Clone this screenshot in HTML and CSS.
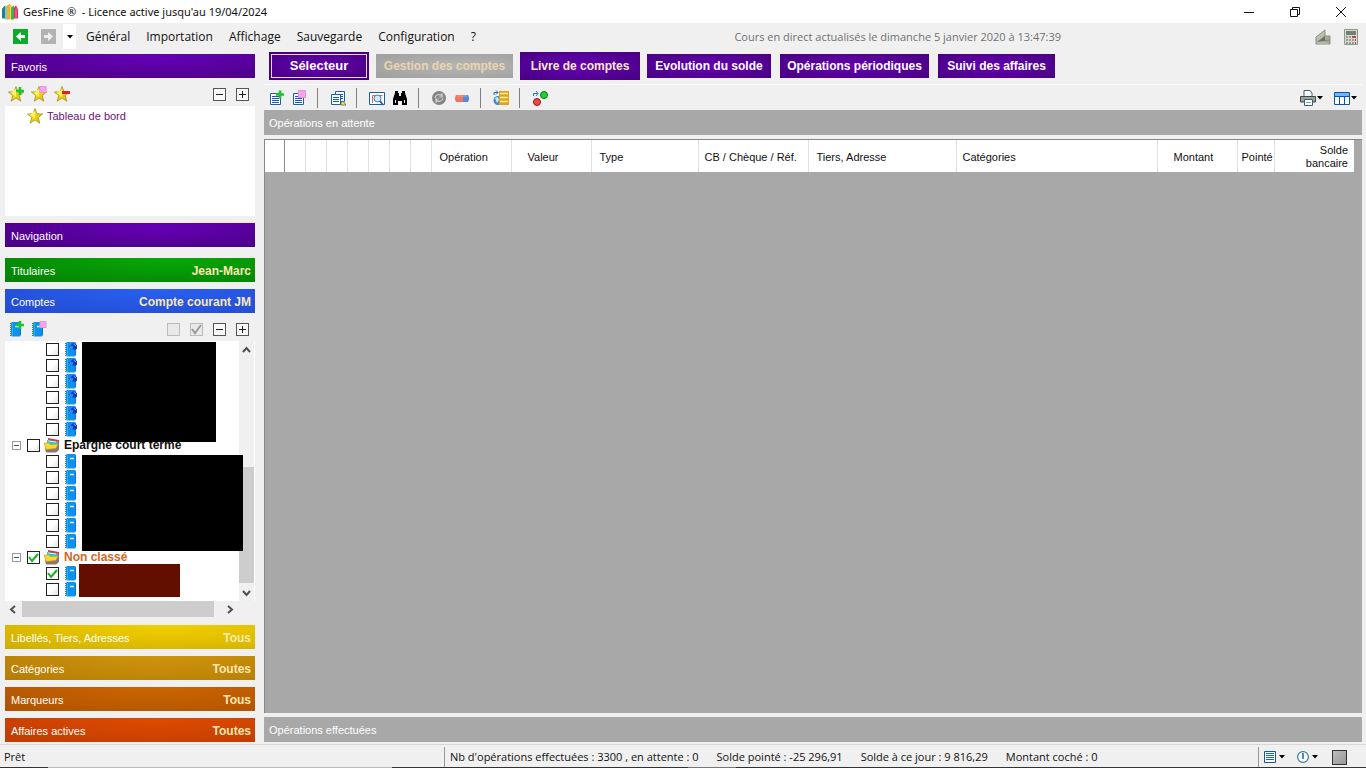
FILE: index.html
```html
<!DOCTYPE html>
<html lang="fr">
<head>
<meta charset="utf-8">
<title>GesFine</title>
<link rel="stylesheet" href="styles.css">
</head>
<body>
<svg class="sprite" aria-hidden="true">
  <defs>
    <linearGradient id="gold" x1="0" y1="0" x2="1" y2="1"><stop offset="0" stop-color="#fff23a"/><stop offset="1" stop-color="#dfb400"/></linearGradient>
    <linearGradient id="stone" x1="0" y1="0" x2="1" y2="1"><stop offset="0" stop-color="#d9ddcc"/><stop offset="1" stop-color="#8d907e"/></linearGradient>
  </defs>
  <symbol id="star" viewBox="0 0 16 16"><path d="M8 .5l2 5.300 5.700.2-4.500 3.500 1.600 5.700L8 12l-4.800 3.200 1.600-5.700L.4 6l5.600-.2z" fill="url(#gold)" stroke="#9a8614" stroke-width=".7"/><path d="M8 3v8L3 7z" fill="#fff45c"/></symbol>
  <symbol id="plus" viewBox="0 0 8 8"><path d="M2.700 0h2.600v2.700H8v2.600H5.300V8H2.700V5.300H0V2.700h2.700z" fill="#18c52a"/></symbol>
  <symbol id="pink" viewBox="0 0 8 8"><path d="M.5.500h7v7h-7z" fill="#f9a3ee" stroke="#e58fdd"/></symbol>
  <symbol id="page" viewBox="0 0 16 16"><path d="M2.500 3.500h10v11h-10z" fill="#fff" stroke="#1c5fa8"/><path d="M4 6.500h7M4 8.500h7M4 10.500h7M4 12.500h7" stroke="#1458b8"/></symbol>
  <symbol id="book" viewBox="0 0 14 16"><path d="M2 2l1-1h8l1 1v12l-1 1.500H3l-1-1z" fill="#0d92ea"/><path d="M11.500 3v11" stroke="#0678ce"/><path d="M1.500 2v13" stroke="#2484b8" stroke-dasharray="1 1"/><path d="M3.500 2v13" stroke="#38abf4"/><path d="M6 5.500h4" stroke="#d8f3ff" stroke-width="1.500"/></symbol>
  <symbol id="bookblue" viewBox="0 0 14 16"><use href="#book"/><path d="M5 6l4-4 4 2v4l-3 1-2-2z" fill="#103cc4"/><path d="M6 6h3M10 3l2 2" stroke="#65b9ff" stroke-width="1"/></symbol>
  <symbol id="folder" viewBox="0 0 16 16"><path d="M4 1l11 2v7L4 9z" fill="#e8374a"/><path d="M3 3l11 1.500V10L3 9z" fill="#24c5d4"/><path d="M4 4l8 1" stroke="#b8fff8"/><path d="M15 6v7l-3 2.500H2L1 11l10-1z" fill="#8a7672"/><path d="M0 6h5l1.500 1.500L14 7l-2 4.500-10 1z" fill="#ffd62e" stroke="#c69512" stroke-width=".6"/></symbol>
  <symbol id="drop" viewBox="0 0 6 4"><path d="M0 0h6L3 3.500z"/></symbol>
</svg>

<header class="titlebar">
  <svg class="logo" viewBox="0 0 16 16"><path d="M0 5l3-3v13H0z" fill="#26808b"/><path d="M3 2l3 1v13H3z" fill="#86c7c4"/><path d="M5 2l3-2v16H5z" fill="#e8b32e"/><path d="M8 0l2 2v14H8z" fill="#f5d764"/><path d="M9 4l3-2v14H9z" fill="#49ae51"/><path d="M12 4l2-2 2 4v9h-4z" fill="#d82b61"/><path d="M14 5v10" stroke="#f68baf"/></svg>
  <h1 class="title">GesFine ®  - Licence active jusqu'au 19/04/2024</h1>
  <div class="winbtns">
    <button aria-label="Réduire"><svg viewBox="0 0 12 12"><path d="M1 6.500h10"/></svg></button>
    <button aria-label="Restaurer"><svg viewBox="0 0 12 12"><path d="M1.500 3.500h7v7h-7zM3.500 3V1.500h7v7H9"/></svg></button>
    <button aria-label="Fermer"><svg viewBox="0 0 12 12"><path d="M1 1l10 10M11 1L1 11"/></svg></button>
  </div>
</header>

<nav class="menubar">
  <button class="arrow" aria-label="Précédent"><svg viewBox="0 0 15 15"><path d="M0 0h15v15H0z" fill="#0cac2a"/><path d="M3 7.500L8 3v3h4v3H8v3z" fill="#fff"/></svg></button>
  <button class="arrow" aria-label="Suivant"><svg viewBox="0 0 15 15"><path d="M0 0h15v15H0z" fill="#b2b2b2"/><path d="M12 7.500L7 3v3H3v3h4v3z" fill="#eee"/></svg></button>
  <button class="history" aria-label="Historique"><svg class="drop"><use href="#drop"/></svg></button>
  <div class="menus"><button>Général</button><button>Importation</button><button>Affichage</button><button>Sauvegarde</button><button>Configuration</button><button>?</button></div>
  <p class="live">Cours en direct actualisés le dimanche 5 janvier 2020 à 13:47:39</p>
  <div class="tools">
    <button aria-label="Bloc"><svg viewBox="0 0 16 16"><path d="M1 8l9-7v6h5v8H1z" fill="url(#stone)" stroke="#8c9080"/><path d="M2 13l8-6v4h4" fill="#667063"/><path d="M2 14h12" stroke="#c9ccba"/></svg></button>
    <button aria-label="Calculatrice"><svg viewBox="0 0 14 16"><path d="M.5.500h13v15H.5z" fill="#d7dad0" stroke="#8f978c"/><path d="M2 2h10v4H2z" fill="#718073"/><path d="M2 8h2M5 8h2M2 11h2M5 11h2M2 14h2M5 14h2M8 11h2M8 14h2" stroke="#81877f" stroke-width="1.500"/><path d="M8 8h4M11 11h1M11 14h1" stroke="#b84856" stroke-width="2"/></svg></button>
  </div>
</nav>

<main class="main">
  <aside class="side">
    <h2 class="band violet fav">Favoris</h2>
    <div class="sidebar-tools">
      <button class="ico" aria-label="Ajouter un favori"><svg><use href="#star"/><use href="#plus" x="8" y="1" width="8" height="8"/></svg></button>
      <button class="ico" aria-label="Modifier le favori"><svg><use href="#star"/><use href="#pink" x="8" y="0" width="8" height="7"/></svg></button>
      <button class="ico" aria-label="Supprimer le favori"><svg><use href="#star"/><path d="M8 5h8v3H8z" fill="#e32121"/></svg></button>
      <span class="grow"></span>
      <button class="box" aria-label="Replier"><svg viewBox="0 0 13 13"><path d="M3 6.500h7"/></svg></button>
      <button class="box" aria-label="Déplier"><svg viewBox="0 0 13 13"><path d="M3 6.500h7M6.500 3v7"/></svg></button>
    </div>
    <div class="favorites"><a href="#tableau"><svg class="i16"><use href="#star"/></svg>Tableau de bord</a></div>
    <h2 class="band violet navhead">Navigation</h2>
    <h2 class="band green">Titulaires <b>Jean-Marc</b></h2>
    <h2 class="band blue">Comptes <b>Compte courant JM</b></h2>
    <div class="sidebar-tools">
      <button class="ico" aria-label="Ajouter un compte"><svg><use href="#book" x="1" width="14" height="16"/><use href="#plus" x="8" y="0" width="8" height="8"/></svg></button>
      <button class="ico" aria-label="Modifier le compte"><svg><use href="#book" width="14" height="16"/><use href="#pink" x="8" y="0" width="8" height="7"/></svg></button>
      <span class="grow"></span>
      <button class="box off" aria-label="Tout décocher"><svg viewBox="0 0 13 13"></svg></button>
      <button class="box off" aria-label="Tout cocher"><svg viewBox="0 0 13 13"><path d="M2 6l3 4 6-8" stroke-width="2"/></svg></button>
      <button class="box" aria-label="Replier"><svg viewBox="0 0 13 13"><path d="M3 6.500h7"/></svg></button>
      <button class="box" aria-label="Déplier"><svg viewBox="0 0 13 13"><path d="M3 6.500h7M6.500 3v7"/></svg></button>
    </div>
    <div class="tree">
      <div class="rows">
        <ul class="group">
          <li><input type="checkbox" aria-label="Compte 1"><svg class="bk"><use href="#bookblue"/></svg></li>
          <li><input type="checkbox" aria-label="Compte 2"><svg class="bk"><use href="#bookblue"/></svg></li>
          <li><input type="checkbox" aria-label="Compte 3"><svg class="bk"><use href="#bookblue"/></svg></li>
          <li><input type="checkbox" aria-label="Compte 4"><svg class="bk"><use href="#bookblue"/></svg></li>
          <li><input type="checkbox" aria-label="Compte 5"><svg class="bk"><use href="#bookblue"/></svg></li>
          <li><input type="checkbox" aria-label="Compte 6"><svg class="bk"><use href="#bookblue"/></svg></li>
        </ul>
        <div class="parent"><button class="fold" aria-label="Replier Epargne court terme"></button><input type="checkbox" id="epargne"><svg class="i16"><use href="#folder"/></svg><label for="epargne">Epargne court terme</label></div>
        <ul class="group">
          <li><input type="checkbox" aria-label="Epargne 1"><svg class="bk"><use href="#book"/></svg></li>
          <li><input type="checkbox" aria-label="Epargne 2"><svg class="bk"><use href="#book"/></svg></li>
          <li><input type="checkbox" aria-label="Epargne 3"><svg class="bk"><use href="#book"/></svg></li>
          <li><input type="checkbox" aria-label="Epargne 4"><svg class="bk"><use href="#book"/></svg></li>
          <li><input type="checkbox" aria-label="Epargne 5"><svg class="bk"><use href="#book"/></svg></li>
          <li><input type="checkbox" aria-label="Epargne 6"><svg class="bk"><use href="#book"/></svg></li>
        </ul>
        <div class="parent orange-text"><button class="fold" aria-label="Replier Non classé"></button><input type="checkbox" id="nonclasse" checked><svg class="i16"><use href="#folder"/></svg><label for="nonclasse">Non classé</label></div>
        <ul class="group">
          <li><input type="checkbox" aria-label="Non classé 1" checked><svg class="bk"><use href="#book"/></svg></li>
          <li><input type="checkbox" aria-label="Non classé 2"><svg class="bk"><use href="#book"/></svg></li>
        </ul>
        <span class="mask mask-a"></span><span class="mask mask-b"></span><span class="mask mask-c"></span>
      </div>
      <div class="vscroll">
        <button aria-label="Défiler vers le haut"><svg viewBox="0 0 9 9"><path d="M1 6l3.500-4L8 6"/></svg></button>
        <span class="thumb"></span>
        <button aria-label="Défiler vers le bas"><svg viewBox="0 0 9 9"><path d="M1 3l3.500 4L8 3"/></svg></button>
      </div>
    </div>
    <div class="hscroll">
      <button aria-label="Défiler à gauche"><svg viewBox="0 0 9 9"><path d="M6 1L2 4.500 6 8"/></svg></button>
      <span class="thumb"></span>
      <button aria-label="Défiler à droite"><svg viewBox="0 0 9 9"><path d="M3 1l4 3.500L3 8"/></svg></button>
    </div>
    <h2 class="band yellow">Libellés, Tiers, Adresses <b>Tous</b></h2>
    <h2 class="band ochre">Catégories <b>Toutes</b></h2>
    <h2 class="band brown">Marqueurs <b>Tous</b></h2>
    <h2 class="band red">Affaires actives <b>Toutes</b></h2>
  </aside>

  <section class="content">
    <nav class="tabs">
      <button class="tab selector">Sélecteur</button>
      <button class="tab t-gestion">Gestion des comptes</button>
      <button class="tab t-livre">Livre de comptes</button>
      <button class="tab t-solde">Evolution du solde</button>
      <button class="tab t-oper">Opérations périodiques</button>
      <button class="tab t-suivi">Suivi des affaires</button>
    </nav>
    <div class="toolbar">
      <button class="ico" aria-label="Ajouter"><svg><use href="#page"/><use href="#plus" x="8" y="0" width="8" height="9"/></svg></button>
      <button class="ico" aria-label="Modifier"><svg><use href="#page"/><use href="#pink" x="7" y="0" width="8" height="8"/></svg></button>
      <span class="sep"></span>
      <button class="ico" aria-label="Dupliquer"><svg><path d="M5.500 1.500h9v10h-9z" fill="#fff" stroke="#1c5fa8"/><path d="M7 4.500h6M7 6.500h6M7 8.500h6" stroke="#1458b8"/><path d="M1.500 4.500h9v10h-9z" fill="#fff" stroke="#1c5fa8"/><path d="M3 7.500h6M3 9.500h6M3 11.500h6" stroke="#1458b8"/><path d="M11 12l2-1 3 4h-5z" fill="#ffe71c" stroke="#2c463d" stroke-width=".6"/></svg></button>
      <span class="sep"></span>
      <button class="ico" aria-label="Aperçu"><svg><path d="M.5 2.500h15v12H.5z" fill="#fff" stroke="#1c5f98"/><path d="M3.500 13V5.500h10" fill="none" stroke="#d86556"/><circle cx="8.500" cy="8.500" r="3.500" fill="#c8edff" stroke="#5475b8"/><path d="M11 11l3 4" stroke="#375da3" stroke-width="2"/></svg></button>
      <button class="ico" aria-label="Rechercher"><svg><path d="M3 1h3v2h1v3h2V3h1V1h3v2l2 6v6h-5v-4H6v4H1V9l2-6z"/><path d="M3.500 10v3M12.500 10v3" stroke="#ddd"/></svg></button>
      <span class="sep"></span>
      <button class="ico" aria-label="Actualiser"><svg><circle cx="8" cy="8" r="7" fill="#858585"/><path d="M4 8a4 4 0 0 1 7-2M12 8a4 4 0 0 1-7 2M11 3v4H8M5 13V9h3" fill="none" stroke="#d0d0d0" stroke-width="1.200"/></svg></button>
      <button class="ico" aria-label="Effacer"><svg><path d="M2 5h8v7H2q-2-3.500 0-7z" fill="#ed765d"/><path d="M9 5h5q2 3.500 0 7H9z" fill="#5588dc"/><path d="M3 6h10" stroke="#f3a391"/></svg></button>
      <span class="sep"></span>
      <button class="ico" aria-label="Transférer"><svg><circle cx="5" cy="10.500" r="4.500" fill="#468bc5"/><path d="M2 8l3-1 1 3-2 3" fill="#c6edff"/><path d="M6 1h10v14H6z" fill="#dda417"/><path d="M7 3.500h8M7 7.500h8M7 11.500h8" stroke="#fff0a0" stroke-width="1.500"/><path d="M1 5V2.500h4M3 .5l2 2-2 2" fill="none" stroke="#1574ba"/></svg></button>
      <span class="sep"></span>
      <button class="ico" aria-label="Basculer"><svg><circle cx="12" cy="5" r="3.500" fill="#16d72c" stroke="#08751c"/><circle cx="5" cy="12" r="3.500" fill="#f04747" stroke="#9d1717"/><path d="M1.500 6V3.500h4M4 1l2 2.500L4 6" fill="none" stroke="#1478bd"/></svg></button>
      <span class="grow"></span>
      <button class="withdrop" aria-label="Imprimer"><svg class="i16"><path d="M4 7V.5h6L12 3v4" fill="#fff" stroke="#375d83"/><path d="M.5 6.500h15V12H.5z" fill="#9ca48d" stroke="#38484b"/><path d="M4.500 9.500h8v6h-8z" fill="#fff" stroke="#375d83"/><path d="M6 12.500h5" stroke="#7a9fc4"/></svg><svg class="drop"><use href="#drop"/></svg></button>
      <button class="withdrop" aria-label="Colonnes"><svg class="i16"><path d="M.5 2.500h15v12H.5z" fill="#fff" stroke="#0756b0"/><path d="M1 3h14v3H1z" fill="#72b6f1"/><path d="M0 6.500h16M5.500 6v9M10.500 6v9" stroke="#0756b0"/></svg><svg class="drop"><use href="#drop"/></svg></button>
    </div>
    <h3 class="graybar">Opérations en attente</h3>
    <div class="grid">
      <table>
        <colgroup><col class="c-sel"><col class="c-flag"><col class="c-flag"><col class="c-flag"><col class="c-flag"><col class="c-flag"><col class="c-flag"><col class="c-flag"><col class="c-date"><col class="c-date"><col class="c-type"><col class="c-ref"><col class="c-tiers"><col><col class="c-date"><col class="c-point"><col class="c-date"></colgroup>
        <thead><tr><th></th><th></th><th></th><th></th><th></th><th></th><th></th><th></th><th class="near">Opération</th><th class="mid">Valeur</th><th class="near">Type</th><th>CB / Chèque / Réf.</th><th class="near">Tiers, Adresse</th><th>Catégories</th><th class="mid">Montant</th><th class="tight">Pointé</th><th class="right">Solde bancaire</th></tr></thead>
      </table>
    </div>
    <h3 class="graybar">Opérations effectuées</h3>
  </section>
</main>

<footer class="status">
  <div class="statusline">
    <span class="ready">Prêt</span>
    <span class="sums"><span>Nb d'opérations effectuées : 3300 , en attente : 0</span><span>Solde pointé : -25 296,91</span><span>Solde à ce jour : 9 816,29</span><span>Montant coché : 0</span></span>
    <span class="statusicons">
      <button class="withdrop" aria-label="Liste"><svg class="i12" viewBox="0 0 12 12"><path d="M.5.500h11v11H.5z" fill="#fff" stroke="#1558a2"/><path d="M2 2.500h8M2 4.500h8M2 6.500h8M2 8.500h8" stroke="#1965c6"/></svg><svg class="drop"><use href="#drop"/></svg></button>
      <button class="withdrop" aria-label="Horloge"><svg class="i12" viewBox="0 0 12 12"><circle cx="6" cy="6" r="5.400" fill="#fff" stroke="#307d92" stroke-width="1.200"/><path d="M6 2v6" stroke="#174f96" stroke-width="1.400"/></svg><svg class="drop"><use href="#drop"/></svg></button>
      <button class="square" aria-label="Couleur"></button>
    </span>
  </div>
  <div class="edge"><i></i><i></i><i></i><i></i><i></i></div>
</footer>
</body>
</html>
```
FILE: styles.css
```css
* { box-sizing: border-box; }
body { margin: 0; height: 100vh; display: flex; flex-direction: column; background: #f0f0f0; color: #111; font: 12px "Open Sans", "Noto Sans", sans-serif; overflow: hidden; }
button { margin: 0; padding: 0; border: 0; background: none; color: inherit; font: inherit; display: inline-flex; align-items: center; justify-content: center; flex: none; }
h1, h2, h3, p, ul { margin: 0; padding: 0; font-size: inherit; font-weight: normal; }
ul { list-style: none; }
svg { display: block; flex: none; }
.sprite { position: absolute; width: 0; height: 0; }
.grow { flex: 1; }
.i16, .ico svg { width: 16px; height: 16px; }
.i12 { width: 12px; height: 12px; }
.drop { width: 6px; height: 4px; }

.titlebar { height: 23px; flex: none; display: flex; align-items: center; background: #fff; padding: 0 2px; }
.logo { width: 16px; height: 17px; }
.title { margin-left: 5px; white-space: pre; font-family: "Noto Sans", sans-serif; font-size: 11px; }
.winbtns { margin-left: auto; display: flex; }
.winbtns button { width: 46px; height: 22px; }
.winbtns svg { width: 12px; height: 12px; fill: none; stroke: #111; }

.menubar { height: 27px; flex: none; display: flex; align-items: center; padding: 0 7px 0 13px; }
.arrow { margin-right: 13px; }
.arrow svg { width: 15px; height: 15px; }
.history { width: 13px; height: 25px; background: #fff; margin-left: -6px; }
.menus { display: flex; gap: 16px; margin-left: 10px; }
.live { margin-left: auto; margin-right: 254px; color: #707070; font-size: 11px; white-space: nowrap; }
.tools { display: flex; gap: 12px; }
.tools svg { width: 16px; height: 16px; }

.main { flex: 1; min-height: 0; display: flex; }
.side { width: 264px; flex: none; padding: 4px 9px 2px 5px; display: flex; flex-direction: column; font: 11px "Liberation Sans", sans-serif; }
.band { height: 24px; flex: none; margin-bottom: 7px; padding: 1px 4px 0 6px; display: flex; align-items: center; justify-content: space-between; color: #fff; }
.band b { color: #fce7b5; font-size: 12px; }
.violet { background: radial-gradient(ellipse at 60% 20%, #6500b5, #480080); }
.green { background: radial-gradient(ellipse at 65% 0, #08a808, #058005); }
.blue { background: radial-gradient(ellipse at 60% 0, #2860f0, #234bd0); }
.yellow { background: radial-gradient(ellipse at 65% 0, #f2d000, #d0ae00); }
.ochre { background: radial-gradient(ellipse at 60% 0, #d0940c, #b47d06); }
.brown { background: radial-gradient(ellipse at 60% 0, #cd6500, #ae5302); }
.red { background: radial-gradient(ellipse at 60% 0, #e04b00, #be3c03); }
.band.fav { margin-bottom: 0; }
.band.navhead { margin: 7px 0 11px; }
.blue.band { margin-bottom: 0; }
.sidebar-tools { height: 28px; flex: none; display: flex; align-items: center; padding: 4px 6px 0 3px; }
.sidebar-tools .ico { margin-right: 7px; }
.box { width: 13px; height: 13px; margin-left: 10px; border: 1px solid #555; background: #f8f8f8; }
.box svg { width: 13px; height: 13px; fill: none; stroke: #222; }
.off { border-color: #bbb; background: #e9e9e9; }
.off svg { stroke: #999; }
.favorites { height: 110px; flex: none; background: #fff; padding: 2px 0 0 22px; }
.favorites a { display: flex; align-items: center; gap: 4px; color: #70107c; text-decoration: none; }

.tree { flex: 1; min-height: 0; display: flex; background: #fff; padding-right: 1px; }
.rows { position: relative; flex: 1; }
.rows li, .parent { height: 16px; display: flex; align-items: center; }
.rows li { padding-left: 41px; gap: 5px; }
.parent { padding-left: 7px; gap: 4px; font-size: 12px; font-weight: bold; }
.parent input { margin-left: 2px; }
.orange-text { color: #d26825; }
.bk { width: 14px; height: 16px; }
.rows input { appearance: none; width: 13px; height: 13px; margin: 0; flex: none; border: 1px solid #222; background: linear-gradient(135deg, #fff 50%, #e4e4e4); }
.rows input:checked { background: url("data:image/svg+xml,%3Csvg xmlns='http://www.w3.org/2000/svg' viewBox='0 0 11 11'%3E%3Cpath d='M1 5l3 4 6-7' fill='none' stroke='%2312b21c' stroke-width='2'/%3E%3C/svg%3E") #fff; }
.fold { width: 9px; height: 9px; border: 1px solid #999; background: linear-gradient(#456, #456) center / 5px 1px no-repeat #fff; }
.parent .fold { margin-right: 2px; }
.mask { position: absolute; z-index: 1; background: #000; }
.mask-a { left: 77px; top: 1px; width: 134px; height: 100px; }
.mask-b { left: 77px; top: 114px; width: 161px; height: 96px; }
.mask-c { left: 74px; top: 223px; width: 101px; height: 33px; background: #620f00; }
.vscroll { width: 15px; display: flex; flex-direction: column; background: #f0f0f0; }
.vscroll button { height: 18px; }
.vscroll .thumb { margin-top: auto; height: 116px; background: #cdcdcd; }
.vscroll svg, .hscroll svg { width: 9px; height: 9px; fill: none; stroke: #505050; stroke-width: 2; }
.hscroll { height: 16px; flex: none; margin-bottom: 8px; padding-right: 17px; display: flex; }
.hscroll button { width: 17px; }
.hscroll .thumb { flex: 1; background: #cdcdcd; margin-right: 7px; }
.band.red { margin-bottom: 0; }

.content { flex: 1; min-width: 0; display: flex; flex-direction: column; padding: 0 4px 2px 0; }
.tabs { height: 35px; flex: none; display: flex; align-items: center; padding: 0 0 3px 5px; gap: 7px; border-bottom: 1px solid #fff; }
.tab { height: 24px; color: #fff; background: radial-gradient(ellipse at center, #6500b5, #480080); font: bold 12px "Liberation Sans", sans-serif; white-space: nowrap; }
.selector { height: 28px; width: 100px; font-size: 13px; border: 2px solid #480080; outline: 1px solid #ddd; outline-offset: -3px; }
.t-gestion { width: 137px; color: #e9d5b0; background: radial-gradient(ellipse at 60% 50%, #b5b5b5, #9f9f9f); }
.t-livre { width: 120px; height: 28px; color: #fdeacb; }
.t-solde { width: 124px; }
.t-oper { width: 149px; margin-left: 2px; }
.t-suivi { width: 117px; margin-left: 2px; }
.toolbar { height: 25px; flex: none; display: flex; align-items: center; padding: 0 5px 0 4px; }
.toolbar .ico { margin-right: 7px; }
.sep { width: 1px; height: 20px; margin: 0 12px 0 3px; background: #808080; }
.withdrop { gap: 1px; }
.toolbar .withdrop { margin-left: 11px; }
.graybar { height: 25px; flex: none; padding-left: 5px; display: flex; align-items: center; background: #a8a8a8; color: #fff; font: 11px "Liberation Sans", sans-serif; }
.grid { flex: 1; min-height: 0; margin: 4px 0; padding-right: 8px; border-top: 1px solid #888; border-left: 1px solid #888; background: #a8a8a8; }
table { width: 100%; table-layout: fixed; border-collapse: collapse; background: #fff; font: 11px/13px "Liberation Sans", sans-serif; }
th { height: 32px; padding: 2px 6px 0; border-right: 1px solid #e0e0e0; font-weight: normal; text-align: left; white-space: nowrap; }
th:first-child { border-right-color: #888; }
th:last-child { border-right: 0; }
th.near { padding-left: 8px; }
th.mid { padding-left: 16px; }
th.tight { padding-left: 4px; padding-right: 4px; }
th.right { text-align: right; white-space: normal; padding-left: 20px; }
.c-sel { width: 19px; }
.c-flag { width: 21px; }
.c-date { width: 80px; }
.c-type { width: 107px; }
.c-ref { width: 110px; }
.c-tiers { width: 148px; }
.c-point { width: 37px; }

.status { flex: none; height: 24px; display: flex; flex-direction: column; border-top: 1px solid #d8d8d8; }
.statusline { flex: 1; display: flex; align-items: stretch; line-height: 20px; white-space: nowrap; font-size: 11px; }
.ready { width: 444px; padding: 2px 0 0 4px; }
.sums { flex: 1; display: flex; gap: 18px; margin: 2px 0 0; padding-left: 5px; border-left: 1px solid #999; }
.statusicons { display: flex; align-items: center; width: 108px; border-left: 1px solid #999; padding-left: 5px; margin-top: 2px; gap: 12px; }
.status .withdrop { gap: 3px; }
.square { width: 15px; height: 15px; margin-left: 2px; border: 1px solid #333; background: linear-gradient(135deg, #bbb, #999); }
.edge { display: flex; height: 2px; }
.edge i { flex: 48; background: #333; }
.edge i:nth-child(2) { flex: 344; background: #bbb; }
.edge i:nth-child(3) { flex: 296; }
.edge i:nth-child(4) { flex: 48; background: #777; }
.edge i:nth-child(5) { flex: 630; }
```
